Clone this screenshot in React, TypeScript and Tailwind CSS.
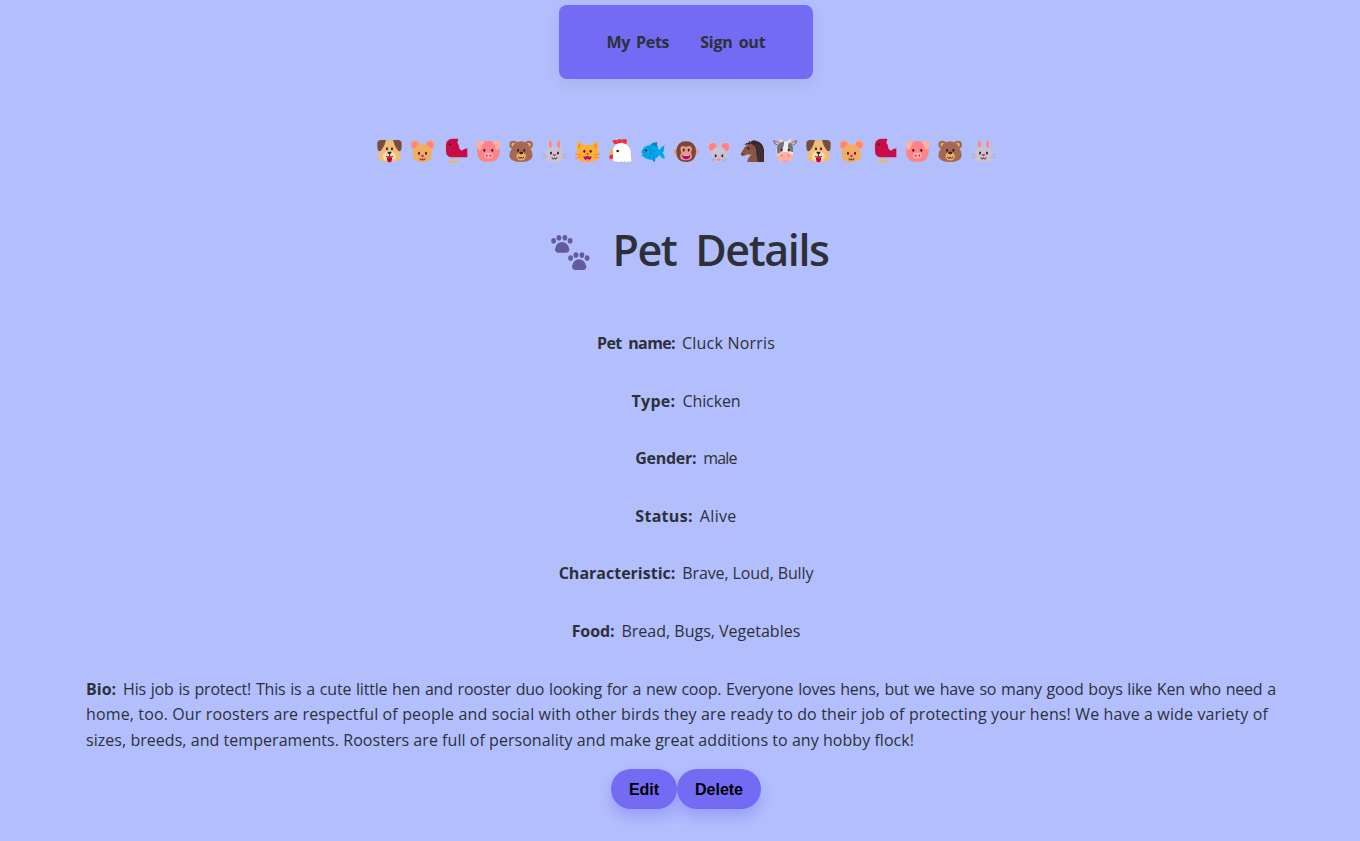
import type { ReactNode } from "react";

const INK = "#2b2130";

function Eyes({ x1 = 42, x2 = 57, y = 48 }: { x1?: number; x2?: number; y?: number }) {
  return (
    <g fill={INK}>
      <ellipse cx={x1} cy={y} rx="3" ry="4.5" />
      <ellipse cx={x2} cy={y} rx="3" ry="4.5" />
    </g>
  );
}

function Mouth({ y }: { y: number }) {
  return (
    <path d={`M42 ${y - 3}q0 5 3.5 5t4-4q0.5 4 4 4t3.5-5`} fill="none" stroke={INK} strokeWidth="2.5" />
  );
}

const dog = (
  <>
    <path d="M24 50Q24 21 44 19H56Q76 21 76 50Q85 58 84 69Q80 84 49 84T14 69Q14 58 24 50Z" fill="#f1bd76" />
    <path d="M13 27Q14 18 25 18H39Q35 34 29 43Q24 52 18 52Q12 50 13 27Z" fill="#7a4c3b" />
    <path d="M86 27Q85 18 74 18H60Q64 34 70 43Q75 52 81 52Q87 50 86 27Z" fill="#7a4c3b" />
    <path d="M49 49Q62 51 68 63Q71 81 49 82T30 63Q36 51 49 49Z" fill="#ffdba6" />
    <Eyes x1={42} x2={57} y={44} />
    <path d="M43 53h13q0 7-6.500 8q-6.500-1-6.500-8Z" fill={INK} />
    <path d="M49.500 60v8M39 67q6 4 10.500 0q4.500 4 10.500 0" fill="none" stroke={INK} strokeWidth="2.500" />
    <path d="M42 70h15v7q-1 8-7.500 8T42 77Z" fill="#d3003f" />
  </>
);

const hamster = (
  <>
    <circle cx="27" cy="33" r="14" fill="#f4aa60" />
    <circle cx="72" cy="33" r="14" fill="#f4aa60" />
    <circle cx="27" cy="33" r="10" fill="#ff8085" />
    <circle cx="72" cy="33" r="10" fill="#ff8085" />
    <path d="M49 31Q69 31 76 50Q85 82 49 84Q13 82 22 50Q29 31 49 31Z" fill="#f3ad61" />
    <Eyes x1={39} x2={60} y={58} />
    <ellipse cx="49.500" cy="66" rx="5" ry="3.500" fill="#ff248b" />
    <Mouth y={76} />
  </>
);

const bird = (
  <>
    <path d="M38 69v15M51 69v15M28 83h14M43 83h15" fill="none" stroke="#f3b43e" strokeWidth="3.500" />
    <path d="M24 26L14 32L24 38Z" fill="#f3b43e" />
    <path d="M21 32Q22 15 40 14H57Q60 15 57 19L55 26Q60 31 60 40Q62 48 68 50Q76 44 85 43V70H40Q21 70 21 51Z" fill="#ca0b4a" />
    <circle cx="33" cy="31" r="3.500" fill={INK} />
  </>
);

const pig = (
  <>
    <path d="M49 21Q84 21 83 54Q82 84 49 84T15 54Q14 21 49 21Z" fill="#ff8286" />
    <path d="M13 30Q13 21 23 21Q34 21 39 25Q30 30 28 45Q25 51 18 45ZM86 30Q86 21 76 21Q65 21 60 25Q69 30 71 45Q74 51 81 45Z" fill="#ffb09f" />
    <Eyes x1={37} x2={61} y={49} />
    <rect x="37" y="56" width="25" height="17" rx="8" fill="#ffb7b7" />
    <ellipse cx="44" cy="65" rx="3" ry="4" fill="#e34269" />
    <ellipse cx="55" cy="65" rx="3" ry="4" fill="#e34269" />
  </>
);

const bear = (
  <>
    <circle cx="25" cy="32" r="12" fill="#a56953" />
    <circle cx="72" cy="32" r="12" fill="#a56953" />
    <circle cx="26" cy="33" r="6.500" fill="#f3ad61" />
    <circle cx="71" cy="33" r="6.500" fill="#f3ad61" />
    <path d="M48 22Q72 24 77 46Q84 54 83 66Q79 84 48 84T13 66Q12 54 20 46Q24 24 48 22Z" fill="#a56953" />
    <Eyes x1={39} x2={58} y={49} />
    <ellipse cx="48.500" cy="67" rx="14" ry="12" fill="#f3ad61" />
    <ellipse cx="48.500" cy="57" rx="6" ry="4" fill={INK} />
    <g transform="translate(-1 0)"><Mouth y={71} /></g>
  </>
);

const rabbit = (
  <>
    <path d="M29 51L31 24Q33 13 38 17Q43 22 45 49M70 51L68 24Q66 13 61 17Q56 22 54 49" fill="#c9c4d2" />
    <path d="M33 46L33 24Q35 14 39 20Q42 26 42 44M66 46L66 24Q64 14 60 20Q57 26 57 44" fill="#ff858b" />
    <path d="M49 37Q72 39 77 59Q82 84 49 84T22 59Q27 39 49 37Z" fill="#cbc5d2" />
    <path d="M13 62L28 64M13 72L29 69M86 62L71 64M86 72L70 69" stroke="#aba1b7" strokeWidth="2" />
    <Eyes x1={39} x2={60} y={57} />
    <path d="M44 61h11q-1 5-5.500 6q-4.500-1-5.500-6Z" fill="#f70a64" />
    <Mouth y={73} />
  </>
);

const cat = (
  <>
    <path d="M19 24Q22 18 38 33H62Q77 18 80 24Q83 39 80 49Q84 58 82 65Q79 84 49 84T17 65Q15 58 19 49Q16 39 19 24Z" fill="#ffb02f" />
    <path d="M22 28L31 35Q25 41 22 46ZM77 28L68 35Q74 41 77 46Z" fill="#ff8a25" />
    <path d="M12 60L29 63M14 73L29 69M87 60L70 63M85 73L70 69" stroke="#ff704a" strokeWidth="2.500" />
    <Eyes x1={40} x2={59} y={52} />
    <path d="M45 58h9l-4.500 6Z" fill="#ef1564" />
    <path d="M37 67Q44 69 49.500 65Q55 69 62 67Q61 79 49.500 79T37 67Z" fill="#b40d74" />
    <path d="M43 76Q49 73 56 76Q49 80 43 76Z" fill="#ff8280" />
  </>
);

const chicken = (
  <>
    <path d="M31 30Q20 18 32 17Q38 19 40 19Q44 12 51 17Q70 11 69 23Q68 30 62 34Z" fill="#f92f32" />
    <path d="M27 46Q14 54 16 60L27 63Z" fill="#ffb22c" />
    <path d="M17 64Q25 59 29 64Q27 77 20 76Q14 73 17 64Z" fill="#f92f32" />
    <path d="M27 48Q30 27 54 26Q76 31 81 53L84 82Q78 88 73 83Q68 89 62 83Q57 89 51 83Q45 89 40 84Q32 86 27 80Z" fill="#fff" />
    <path d="M81 56L84 82Q78 88 73 83Q68 89 62 83Q57 89 51 83Q45 89 40 84Q32 86 27 80" fill="none" stroke="#9a91a9" strokeWidth="1.500" />
    <circle cx="41" cy="51" r="4" fill={INK} />
  </>
);

const fish = (
  <>
    <path d="M37 38Q44 24 61 25Q58 32 63 42ZM40 70L51 84Q56 82 54 69Z" fill="#0085ca" />
    <path d="M13 55Q20 32 43 33Q58 34 67 48Q73 37 83 34Q79 45 81 50L77 56Q83 63 83 75Q73 73 67 63Q56 79 39 77Q24 75 13 64Q20 62 13 55Z" fill="#00a6ec" />
    <path d="M38 38Q47 55 36 73M49 48q5 3 1 7M48 62q5 3 1 7" fill="none" stroke="#0078b7" strokeWidth="2" />
    <circle cx="27" cy="49" r="3.500" fill={INK} />
  </>
);

const monkey = (
  <>
    <circle cx="19" cy="53" r="8" fill="#e49b89" />
    <circle cx="78" cy="53" r="8" fill="#e49b89" />
    <path d="M48 22Q76 22 78 51Q78 84 48 84T19 51Q21 22 48 22Z" fill="#7d4533" />
    <path d="M48 39Q63 31 66 45Q66 51 63 55Q73 79 48 79T34 55Q30 50 31 43Q35 31 48 39Z" fill="#e49b89" />
    <Eyes x1={41} x2={56} y={48} />
    <path d="M36 63H61Q60 76 48.500 76T36 63Z" fill="#b50b76" />
    <path d="M40 63H57V65H40Z" fill="#fff" />
  </>
);

const mouse = (
  <>
    <circle cx="29" cy="39" r="15" fill="#cbc4d2" />
    <circle cx="67" cy="39" r="15" fill="#cbc4d2" />
    <circle cx="29" cy="39" r="12" fill="#ff8086" />
    <circle cx="67" cy="39" r="12" fill="#ff8086" />
    <path d="M48 37Q67 39 71 59Q67 84 48 84T25 59Q29 39 48 37Z" fill="#cbc4d2" />
    <path d="M24 74L38 76M28 82L38 79M72 74L58 76M69 82L58 79" stroke="#aaa0b6" strokeWidth="2" />
    <Eyes x1={38} x2={58} y={65} />
    <ellipse cx="48" cy="77" rx="5" ry="4" fill="#ff837e" />
  </>
);

const horse = (
  <>
    <path d="M41 27Q48 15 62 21Q82 27 84 49V84H57Z" fill="#34282b" />
    <path d="M38 31L40 20L46 29Q62 36 61 55L65 84H33Q36 70 47 61Q41 63 35 61L23 66Q14 67 14 60Q19 51 26 40Q31 34 38 31Z" fill="#8c5543" />
    <path d="M40 20L45 30L25 33Q31 25 38 26Z" fill="#34282b" />
    <path d="M59 30Q76 51 67 84M68 32Q82 52 77 84" fill="none" stroke="#6a4437" strokeWidth="2" />
    <circle cx="37" cy="43" r="3.500" fill={INK} />
    <circle cx="20" cy="60" r="2" fill={INK} />
  </>
);

const cow = (
  <>
    <path d="M36 26Q31 23 34 15Q39 14 43 24ZM62 26Q68 23 65 15Q60 14 56 24Z" fill="#ffdda6" />
    <path d="M33 28Q20 18 12 19Q13 34 28 35ZM64 28Q77 18 85 19Q84 34 70 35Z" fill="#7c7780" />
    <path d="M31 29Q22 22 17 24Q20 31 31 33M67 29Q76 22 80 24Q78 31 67 33" fill="#ffb09d" />
    <path d="M48 22Q67 22 72 39Q74 57 68 74H28Q20 57 24 39Q30 22 48 22Z" fill="#eeecf0" />
    <path d="M46 22Q28 24 24 40L25 60Q43 56 46 22ZM60 25Q54 36 59 47Q64 55 72 54V39Q70 29 60 25Z" fill="#77737b" />
    <Eyes x1={38} x2={59} y={48} />
    <ellipse cx="48.500" cy="69" rx="24" ry="15" fill="#ffb1a1" />
    <path d="M37 63l3 3M60 63l-3 3" stroke="#ea4d73" strokeWidth="3.500" />
    <path d="M39 80Q48 87 58 80Z" fill="#ff7d93" />
  </>
);

const animals: ReactNode[] = [
  dog, hamster, bird, pig, bear, rabbit, cat, chicken, fish, monkey,
  mouse, horse, cow, dog, hamster, bird, pig, bear, rabbit,
];

function Paw() {
  return (
    <>
      <path d="M4 14Q5.500 7 11 7T18.300 14Q18.500 17.700 15 17.700H7.500Q4 17.700 4 14Z" />
      <ellipse cx="2.600" cy="5.700" rx="2.400" ry="2.800" />
      <ellipse cx="7.900" cy="2.800" rx="2.400" ry="2.800" />
      <ellipse cx="13.900" cy="2.800" rx="2.400" ry="2.800" />
      <ellipse cx="19.100" cy="5.700" rx="2.400" ry="2.800" />
    </>
  );
}

const details = [
  { label: "Pet name:", value: "Cluck Norris", l: "tracking-[-0.6px] [word-spacing:3px]", v: "tracking-[0.2px]" },
  { label: "Type:", value: "Chicken", l: "tracking-[0.3px]", v: "tracking-[-0.1px]" },
  { label: "Gender:", value: "male", l: "tracking-[-0.3px]", v: "tracking-[-0.8px]" },
  { label: "Status:", value: "Alive", l: "tracking-[0.3px]", v: "tracking-[0.35px]" },
  { label: "Characteristic:", value: "Brave, Loud, Bully", l: "", v: "tracking-[-0.12px]" },
  { label: "Food:", value: "Bread, Bugs, Vegetables", l: "tracking-[-0.1px]", v: "" },
];

export default function App() {
  return (
    <div className="flex h-screen flex-col items-center overflow-hidden bg-[#b3bffd] pt-[5px] pr-[74px] pl-[86px] font-['Open_Sans',sans-serif] text-base leading-[25.6px] text-[#2d3038]">
      <nav className="flex h-[74px] w-[254px] shrink-0 items-center justify-center gap-[31px] rounded-lg bg-[#736bf4] pt-0.5 font-bold shadow-[0_4px_16px_rgba(0,0,0,0.08)]">
        <a className="tracking-[-0.3px] [word-spacing:2px]">My Pets</a>
        <a className="tracking-[-0.2px] [word-spacing:2px]">Sign out</a>
      </nav>

      <div className="mt-[55px] flex h-8 shrink-0">
        {animals.map((animal, i) => (
          <svg key={i} viewBox="0 0 99 96" className="h-8 w-[33px]">{animal}</svg>
        ))}
      </div>

      <h1 className="mt-[54px] mr-[-8px] flex h-[60px] shrink-0 items-center text-[43px] leading-[60px] font-semibold tracking-[-1.4px] [word-spacing:9px]">
        <svg viewBox="0 0 40 36" className="mt-[5px] mr-[21px] h-9 w-10" fill="#655a9b">
          <Paw />
          <g transform="translate(17 17.3)"><Paw /></g>
        </svg>
        Pet Details
      </h1>

      <div className="mt-[51px] flex w-full shrink-0 flex-col items-center gap-8">
        {details.map((d) => (
          <p key={d.label} className="flex gap-[7px]">
            <strong className={d.l}>{d.label}</strong>
            <span className={d.v}>{d.value}</span>
          </p>
        ))}
        <p className="w-full whitespace-nowrap">
          <span className="flex gap-[7px]">
            <strong>Bio:</strong>
            <span className="tracking-[-0.2px] [word-spacing:0.85px]">His job is protect! This is a cute little hen and rooster duo looking for a new coop. Everyone loves hens, but we have so many good boys like Ken who need a</span>
          </span>
          <span className="block tracking-[0.132px]">home, too. Our roosters are respectful of people and social with other birds they are ready to do their job of protecting your hens! We have a wide variety of</span>
          <span className="block tracking-[0.045px]">sizes, breeds, and temperaments. Roosters are full of personality and make great additions to any hobby flock!</span>
        </p>
      </div>

      <div className="mt-4 flex shrink-0 font-['Liberation_Sans',sans-serif] font-bold text-black">
        <button className="h-10 w-[66px] rounded-[20px] bg-[#736bf4] shadow-[0_8px_15px_rgba(115,107,244,0.4)]">Edit</button>
        <button className="h-10 w-[84px] rounded-[20px] bg-[#736bf4] shadow-[0_8px_15px_rgba(115,107,244,0.4)]">Delete</button>
      </div>
    </div>
  );
}
